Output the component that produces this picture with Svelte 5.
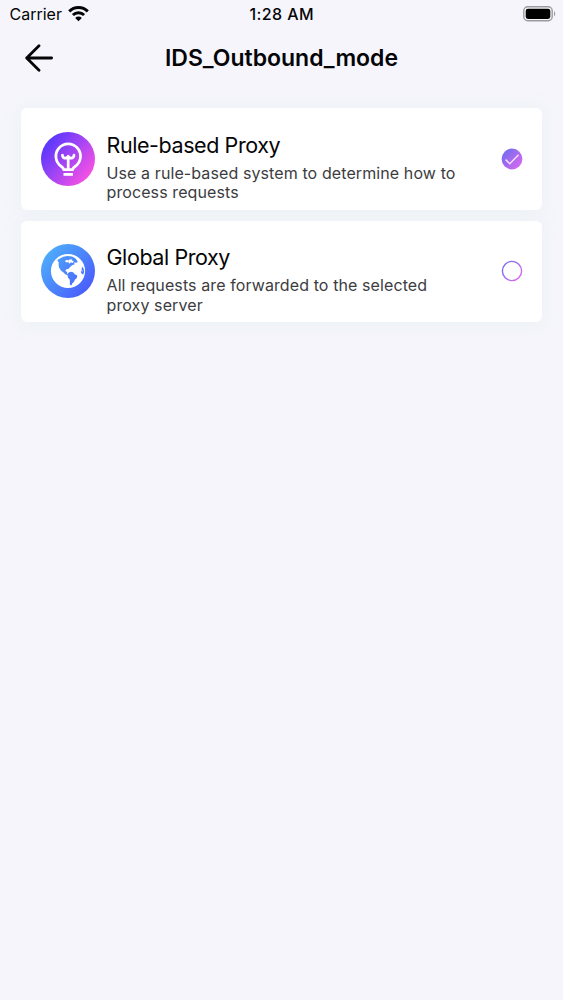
<script lang="ts">
  const MODES = [
    {
      key: "rule",
      title: "Rule-based Proxy",
      description: "Use a rule-based system to determine how to process requests",
    },
    {
      key: "global",
      title: "Global Proxy",
      description: "All requests are forwarded to the selected proxy server",
    },
  ];

  let selected = $state("rule");
</script>

<div class="screen">
  <div class="status-bar">
    <div class="carrier">
      <span>Carrier</span>
      <svg class="wifi" viewBox="0 0 21 16" aria-hidden="true">
        <g fill="none" stroke="#050507" stroke-width="2.9">
          <path d="M1.2 5.4a13.2 13.2 0 0 1 18.6 0" />
          <path d="M4.9 9.1a7.9 7.9 0 0 1 11.2 0" />
        </g>
        <path d="M10.5 15.2 7.2 11.9a4.6 4.6 0 0 1 6.6 0z" fill="#050507" />
      </svg>
    </div>
    <span class="time">1:28 AM</span>
    <svg class="battery" viewBox="0 0 33 16" aria-hidden="true">
      <rect x="0.8" y="0.8" width="28.4" height="14" rx="4" fill="none" stroke="#9b9b9f" stroke-width="1.4" />
      <rect x="2.7" y="2.7" width="24.6" height="10.2" rx="2.3" fill="#000" />
      <path d="M31 5.3c1.6.5 1.6 4.5 0 5z" fill="#9b9b9f" />
    </svg>
  </div>

  <header class="nav-bar">
    <button type="button" class="back" aria-label="Back">
      <svg viewBox="0 0 28 28" aria-hidden="true">
        <path d="M14 1.8 1.7 14 14 26.2M1.7 14h24.9" />
      </svg>
    </button>
    <h1>IDS_Outbound_mode</h1>
  </header>

  <main class="modes" role="radiogroup" aria-label="Outbound mode">
    {#each MODES as mode (mode.key)}
      <button
        type="button"
        class="mode"
        role="radio"
        aria-checked={selected === mode.key}
        onclick={() => (selected = mode.key)}
      >
        {#if mode.key === "rule"}
          <svg class="mode-icon" viewBox="0 0 54 54" aria-hidden="true">
            <defs>
              <linearGradient id="rule-fill" x1="0.12" y1="0.2" x2="0.88" y2="0.8">
                <stop offset="0" stop-color="#5b38fb" />
                <stop offset="0.5" stop-color="#a545f4" />
                <stop offset="1" stop-color="#f350e4" />
              </linearGradient>
            </defs>
            <circle cx="27" cy="27" r="27" fill="url(#rule-fill)" />
            <g fill="none" stroke="#fff" stroke-linejoin="round">
              <path d="M22.7 37.6c-.2-1.5-1-2.2-2.3-3.1a12.3 12.3 0 1 1 13.6 0c-1.3.9-2.1 1.6-2.3 3.1z" stroke-width="2.8" />
              <path d="M21.4 23.1c.2 3.3 3.8 4.4 5.8 1 2 3.4 5.6 2.3 5.8-1M27.2 24.6v13" stroke-width="2.7" stroke-linecap="round" />
              <path d="M22.5 42.4h9.4" stroke-width="2.8" />
            </g>
          </svg>
        {:else}
          <svg class="mode-icon" viewBox="0 0 54 54" aria-hidden="true">
            <defs>
              <linearGradient id="globe-fill" gradientUnits="userSpaceOnUse" x1="6" y1="10" x2="48" y2="46">
                <stop offset="0" stop-color="#4daafb" />
                <stop offset="1" stop-color="#4a5dfb" />
              </linearGradient>
            </defs>
            <circle cx="27" cy="27" r="27" fill="url(#globe-fill)" />
            <circle cx="27" cy="27" r="17.1" fill="#fff" />
            <g fill="url(#globe-fill)">
              <path d="M16.2 16 19 14.6l3.2-1.9 4.2-.7 4.6.6 3.6 1.8 2.2 3.5-1.6.9-2.4-.4.9 1.8-2.6 1-2 1.7-1.5 1.9-2.3.4-1 1.7 1.9 1.1-.2 1.6 2.4.9-.5.9-3.3-1-2.4-2.2-2.3-1.7-2.1-3.6-.2-4.7z" />
              <path d="m27.4 28.7 1.9-1 2.9.6 1.5 1.9 2.6 1.4-.6 2.7-1.9 1.5-.7 2-1.9 1.6-.7 2.2-1.6-.9-.1-4.9-1.9-2.3-.4-2.9z" />
              <path d="m41.2 22.4 1.4 2.3.6 2.8-.9 3.1-1.4-.5-1.2-2.3.8-1.7z" />
            </g>
            <path d="m23.9 16.9 1.9-1.1 1.6.7 1.4-1.2 2.3.3.4 1.4 1.5.5-1.4 1.5-1.8-.8-1.2 1.5-1.5-1.7-1.8.5z" fill="#fff" />
            <path d="m39.3 26.6 2.5.5" stroke="#fff" stroke-width="0.8" />
          </svg>
        {/if}

        <span class="mode-text">
          <span class="mode-title">{mode.title}</span>
          <span class="mode-description">{mode.description}</span>
        </span>

        <svg class="mode-radio" viewBox="0 0 22 22" aria-hidden="true">
          <defs>
            <linearGradient id="radio-{mode.key}" x1="0.1" y1="0.15" x2="0.9" y2="0.85">
              <stop offset="0" stop-color="#756cf0" />
              <stop offset="1" stop-color="#d568ef" />
            </linearGradient>
          </defs>
          {#if selected === mode.key}
            <circle cx="11" cy="11" r="10.4" fill="url(#radio-{mode.key})" />
            <path d="m4.6 11.6 4.2 4.2 8.8-9" fill="none" stroke="#f6dcff" stroke-width="1.5" />
          {:else}
            <circle cx="11" cy="11" r="9.6" fill="none" stroke="url(#radio-{mode.key})" stroke-width="1.4" />
          {/if}
        </svg>
      </button>
    {/each}
  </main>
</div>

<style>
  :global(body) {
    background: #f5f5fb;
  }
  .screen {
    box-sizing: border-box;
    min-height: 1000px;
    background: #f5f5fb;
    color: #050507;
    font-family: Inter, "Liberation Sans", sans-serif;
  }
  .status-bar {
    display: grid;
    grid-template-columns: 1fr auto 1fr;
    align-items: center;
    height: 28px;
    padding: 0 7px 0 9.5px;
    font-size: 16px;
  }
  .carrier {
    display: flex;
    align-items: center;
    gap: 6px;
  }
  .wifi {
    width: 21px;
    height: 16px;
  }
  .time {
    position: relative;
    left: -1px;
    font-weight: 500;
    font-size: 16px;
    letter-spacing: 0.4px;
  }
  .battery {
    width: 33px;
    height: 16px;
    justify-self: end;
  }
  .nav-bar {
    display: grid;
    grid-template-columns: 60px 1fr 60px;
    align-items: center;
    height: 59px;
  }
  .back {
    display: flex;
    padding: 0 0 0 25px;
    border: 0;
    background: none;
    cursor: pointer;
  }
  .back svg {
    width: 28px;
    height: 28px;
    fill: none;
    stroke: #050507;
    stroke-width: 2.8;
    stroke-linecap: round;
    stroke-linejoin: round;
  }
  h1 {
    margin: 0;
    font-size: 23px;
    font-weight: 600;
    text-align: center;
  }
  .modes {
    display: flex;
    flex-direction: column;
    gap: 11px;
    padding: 21px 21px 0;
  }
  .mode {
    display: flex;
    align-items: center;
    height: 101.5px;
    padding: 0 19.5px 0 20px;
    border: 0;
    border-radius: 6px;
    background: #fff;
    box-shadow: 0 2px 14px rgba(225, 240, 240, 0.55);
    font: inherit;
    text-align: left;
    cursor: pointer;
  }
  .mode-icon {
    flex: none;
    width: 54px;
    height: 54px;
  }
  .mode-text {
    display: flex;
    flex-direction: column;
    width: 360px;
    margin: 15.5px auto 0 11.5px;
  }
  .mode-title {
    font-size: 21.5px;
    line-height: 28px;
    letter-spacing: -0.42px;
    color: #050507;
  }
  .mode-description {
    margin-top: 5px;
    font-size: 16px;
    line-height: 19.3px;
    letter-spacing: 0.1px;
    color: #3c3c3f;
  }
  .mode-radio {
    flex: none;
    width: 22px;
    height: 22px;
  }
</style>
